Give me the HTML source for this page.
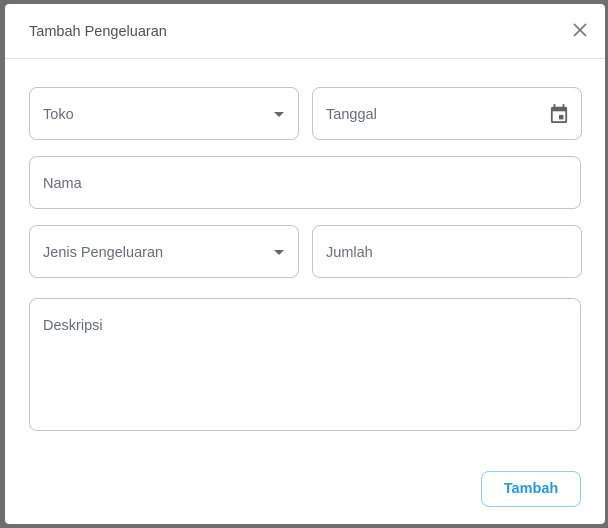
<!DOCTYPE html>
<html><head><meta charset="utf-8"><style>
*{box-sizing:border-box;margin:0;padding:0}
body{width:608px;height:528px;background:#6e6e6e;font-family:"Liberation Sans",sans-serif;position:relative;overflow:hidden}
.modal{position:absolute;left:5px;top:4px;width:600px;height:520px;background:#fff;border-radius:4px}
.title{position:absolute;left:24px;top:20px;font-size:14.5px;color:#505050}
.close{position:absolute;left:567px;top:18px}
.hr{position:absolute;left:0;right:0;top:54px;height:1px;background:#e2e2e2}
.f{position:absolute;border:1px solid #c6c6c6;border-radius:8px;font-size:14.5px;color:#676d76}
.f span{position:absolute;left:13px;top:19px}
.arr{position:absolute;top:24px;right:14px;width:0;height:0;border-left:5px solid transparent;border-right:5px solid transparent;border-top:5px solid #666}
.btn{position:absolute;left:476px;top:467px;width:100px;height:36px;border:1px solid #90cbf2;border-radius:8px;color:#2a97e0;font-weight:bold;font-size:14.5px;text-align:center;line-height:34px}
</style></head><body>
<div class="modal">
<div class="title">Tambah Pengeluaran</div>
<svg class="close" width="16" height="16" viewBox="0 0 16 16"><path d="M2 2L14 14M14 2L2 14" stroke="#777" stroke-width="1.6"/></svg>
<div class="hr"></div>
<div class="f" style="left:24px;top:83px;width:270px;height:53px"><span>Toko</span><div class="arr"></div></div>
<div class="f" style="left:307px;top:83px;width:270px;height:53px"><span>Tanggal</span>
<svg style="position:absolute;right:13px;top:16px" width="18" height="20" viewBox="0 0 20 22"><rect x="4" y="0" width="2" height="4" fill="#616161"/><rect x="14" y="0" width="2" height="4" fill="#616161"/><rect x="1" y="3" width="18" height="18" rx="2" fill="#616161"/><rect x="3" y="8" width="14" height="11" fill="#fff"/><rect x="10" y="12" width="5" height="5" fill="#616161"/></svg></div>
<div class="f" style="left:24px;top:152px;width:552px;height:53px"><span>Nama</span></div>
<div class="f" style="left:24px;top:221px;width:270px;height:53px"><span>Jenis Pengeluaran</span><div class="arr"></div></div>
<div class="f" style="left:307px;top:221px;width:270px;height:53px"><span>Jumlah</span></div>
<div class="f" style="left:24px;top:294px;width:552px;height:133px"><span style="top:19px">Deskripsi</span></div>
<div class="btn">Tambah</div>
</div>
</body></html>
